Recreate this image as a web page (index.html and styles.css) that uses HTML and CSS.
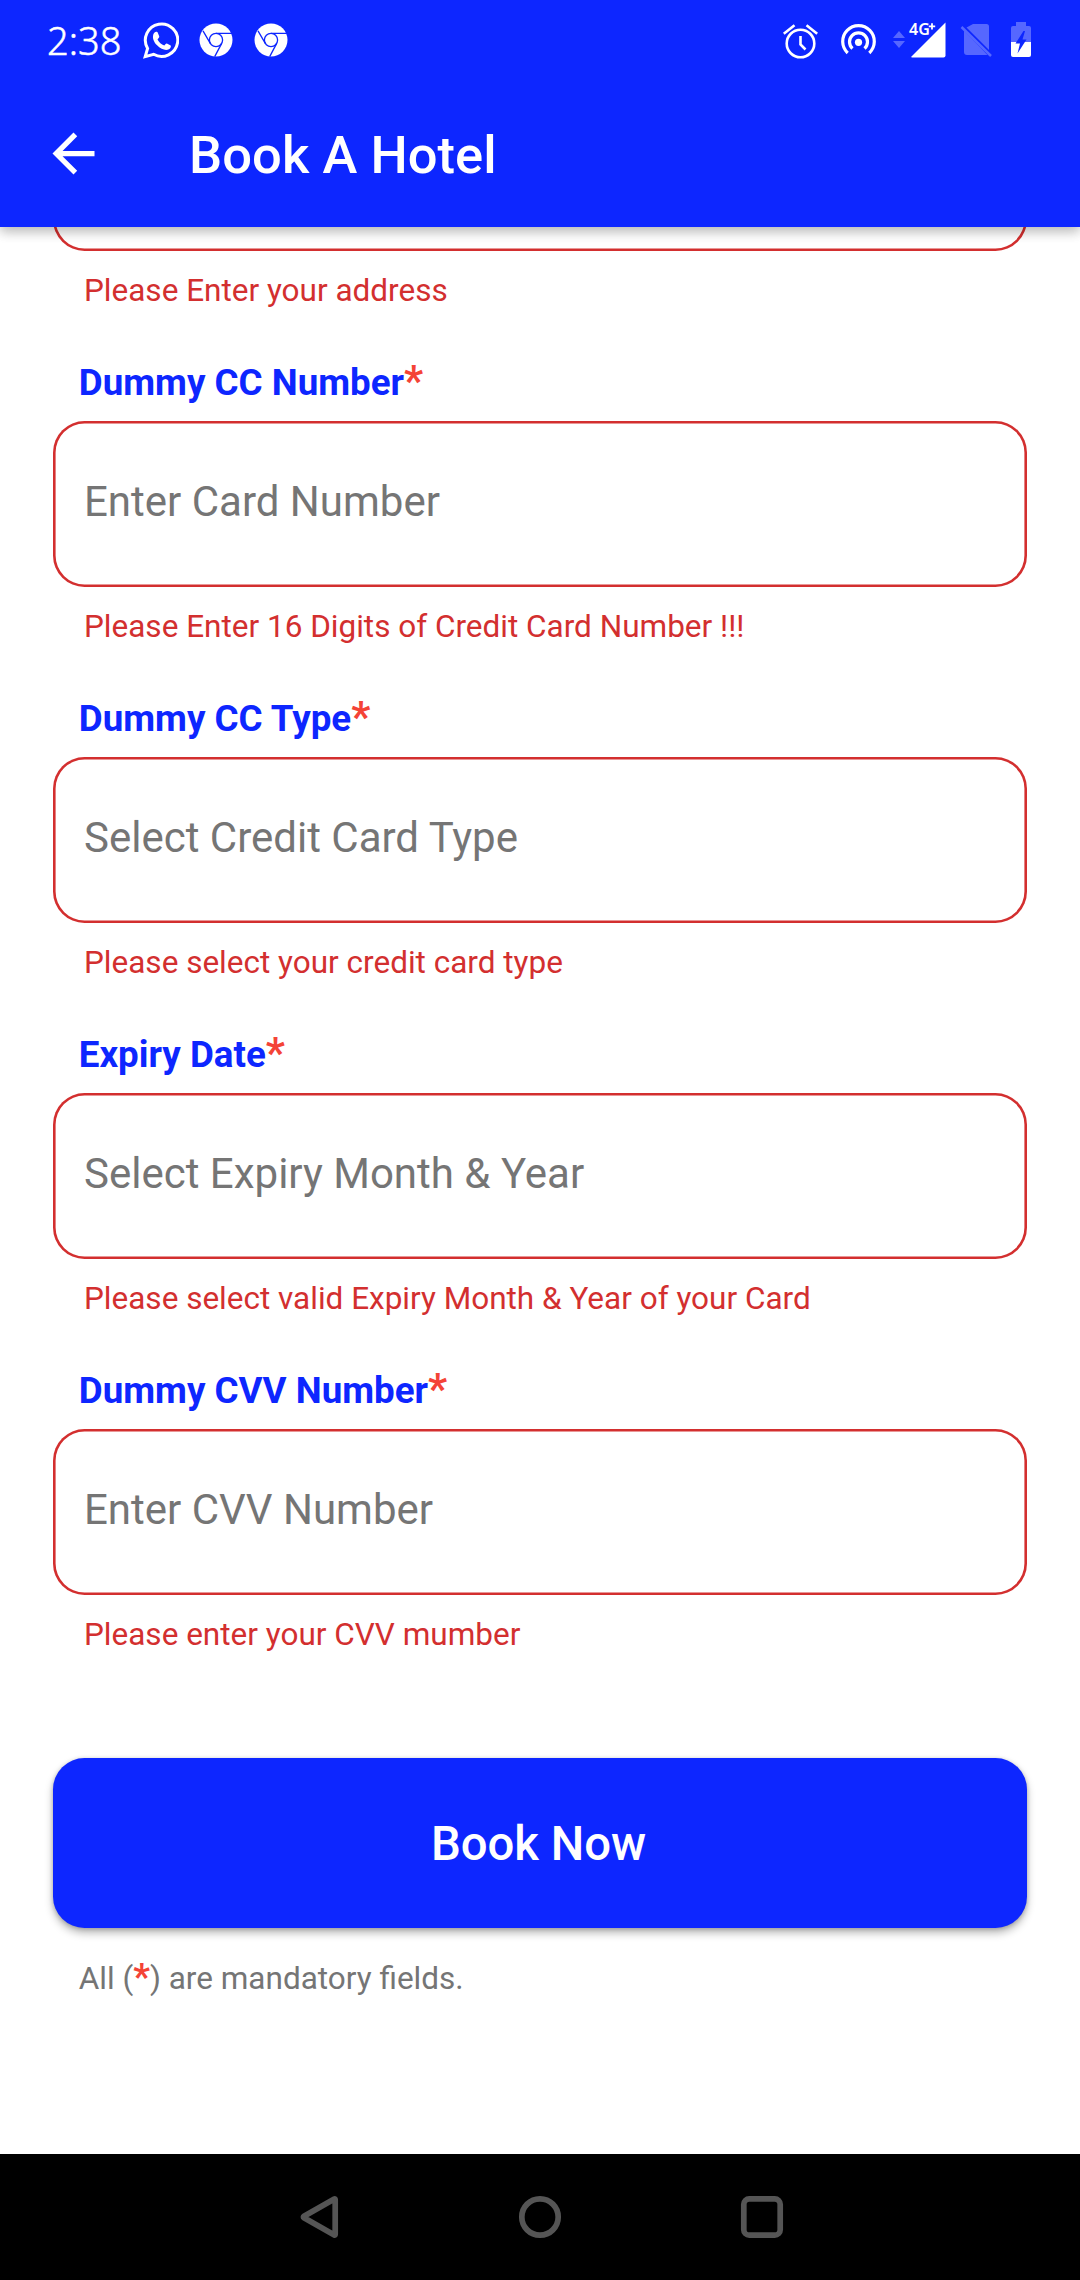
FILE: index.html
```html
<!DOCTYPE html>
<html lang="en">
<head>
<meta charset="utf-8">
<title>Book A Hotel</title>
<link rel="stylesheet" href="styles.css">
</head>
<body>
<div class="screen">
  <header class="top">
    <div class="status">
      <div class="status-left">
        <span class="time">2:38</span>
        <svg class="ic-whatsapp" width="36" height="37" viewBox="0 0 36 37">
          <path d="M2.2 34.6 4.6 26.4A16.2 16.2 0 1 1 10.6 32.300Z" fill="none" stroke="#fff" stroke-width="3" stroke-linejoin="miter"/>
          <path d="M10.300 12.400c.8-1.700 1.700-2.600 2.900-2.600.9 0 1.300.2 1.700 1.200l1.300 3.200c.3.800-.1 1.500-1.700 3.200 1.700 2.900 3.700 4.800 6.800 6.100 1.300-1.400 1.800-2.200 2.600-1.900l3.300 1.700c.8.4.8 1 .5 2-.6 1.900-2.600 2.700-4.600 2.700-2.600-.2-6.100-1.700-9.300-5-2.900-3.200-4.600-6.700-3.500-10.600z" fill="#fff"/>
        </svg>
        <svg class="ic-chrome" width="34" height="34" viewBox="0 0 34 34">
          <circle cx="17" cy="17" r="16.500" fill="#fff"/>
          <g fill="none" stroke="#0d26ff" stroke-width="1.300">
            <circle cx="17" cy="17" r="6.600"/>
            <path d="M17 10.400H33M11.300 20.400 4 7.800M22.700 20.400 15.700 33.600"/>
          </g>
        </svg>
        <svg class="ic-chrome" width="34" height="34" viewBox="0 0 34 34">
          <circle cx="17" cy="17" r="16.500" fill="#fff"/>
          <g fill="none" stroke="#0d26ff" stroke-width="1.300">
            <circle cx="17" cy="17" r="6.600"/>
            <path d="M17 10.400H33M11.300 20.400 4 7.800M22.700 20.400 15.700 33.600"/>
          </g>
        </svg>
      </div>
      <svg class="status-right" width="260" height="60" viewBox="780 10 260 60">
        <g fill="none" stroke="#fff" stroke-width="2.600">
          <circle cx="800.500" cy="43.500" r="13.800"/>
          <path d="M800.500 36V44.500L805.500 49.500M783.800 33.800 794.500 25.300M817.200 33.800 806.500 25.300"/>
        </g>
        <g fill="none" stroke="#fff" stroke-width="3.200">
          <path d="M847.700 53A15.800 15.800 0 1 1 869.300 53"/>
          <path d="M852.500 48.500A9 9 0 1 1 864.500 48.500"/>
        </g>
        <circle cx="858.500" cy="42.300" r="3.600" fill="#fff"/>
        <g fill="#fff" fill-opacity=".3">
          <path d="M893 38 899 31 905 38ZM893 41H905L899 48Z"/>
          <path d="M973 24H986.500Q989 24 989 26.500V50L966.500 27.500ZM964 30.500 987.500 55H967Q964 55 964 52Z"/>
          <path d="M1011 42V28Q1011 26 1013 26H1016V22H1026V26H1029Q1031 26 1031 28V42Z"/>
        </g>
        <path d="M961.500 27 991 56" stroke="#5668ff" stroke-width="2.500"/>
        <path d="M911 57 945.500 22.500V55.500Q945.500 57.500 943.500 57.500H912Z" fill="#fff"/>
        <text class="net" x="909" y="34.900">4G</text>
        <path d="M928.800 26.400H935.200M932 23.200V29.600" stroke="#fff" stroke-width="1.800"/>
        <path d="M1011 42H1031V55Q1031 57 1029 57H1013Q1011 57 1011 55Z" fill="#fff"/>
        <path d="M1023.500 31 1015.500 43.500H1020L1017.500 53.500 1026.500 39.500H1022.500L1025 31Z" fill="#0d26ff"/>
      </svg>
    </div>
    <div class="bar">
      <svg width="63" height="63" viewBox="0 0 24 24"><path fill="#fff" d="M20 11H7.830l5.590-5.590L12 4l-8 8 8 8 1.410-1.410L7.830 13H20v-2z"/></svg>
      <h1 class="title">Book A Hotel</h1>
    </div>
  </header>
  <main class="form">
    <div class="field clipped">
      <div class="box"></div>
      <p class="error">Please Enter your address</p>
    </div>
    <div class="field">
      <div class="label">Dummy CC Number<span class="star">*</span></div>
      <div class="box">Enter Card Number</div>
      <p class="error">Please Enter 16 Digits of Credit Card Number !!!</p>
    </div>
    <div class="field">
      <div class="label">Dummy CC Type<span class="star">*</span></div>
      <div class="box">Select Credit Card Type</div>
      <p class="error">Please select your credit card type</p>
    </div>
    <div class="field">
      <div class="label">Expiry Date<span class="star">*</span></div>
      <div class="box">Select Expiry Month &amp; Year</div>
      <p class="error">Please select valid Expiry Month &amp; Year of your Card</p>
    </div>
    <div class="field">
      <div class="label">Dummy CVV Number<span class="star">*</span></div>
      <div class="box">Enter CVV Number</div>
      <p class="error">Please enter your CVV mumber</p>
    </div>
    <button class="book">Book Now</button>
    <p class="note">All (<span class="star">*</span>) are mandatory fields.</p>
  </main>
  <nav class="nav">
    <svg width="44" height="46" viewBox="0 0 44 46"><path d="M39.200 5.500V40.500Q39.200 41.500 38.300 41L8 23.800Q6.800 23 8 22.200L38.300 5Q39.200 4.500 39.200 5.500Z"/></svg>
    <svg width="44" height="46" viewBox="0 0 44 46"><circle cx="22" cy="23" r="18.200"/></svg>
    <svg width="44" height="46" viewBox="0 0 44 46"><rect x="3.800" y="4.800" width="36.400" height="36.400" rx="5.500"/></svg>
  </nav>
</div>
</body>
</html>
```

FILE: styles.css
```css
* { box-sizing: border-box; }
body { margin: 0; background: #fff; font-family: Roboto, sans-serif; }
h1, p { margin: 0; }
svg { display: block; flex: none; }

.screen { width: 1080px; height: 2280px; display: flex; flex-direction: column; overflow: hidden; }

.top {
  position: relative;
  z-index: 1;
  height: 227px;
  flex: none;
  background: #0d26ff;
  color: #fff;
  box-shadow: 0 5px 11px rgba(0, 0, 0, .2), 0 2px 14px rgba(0, 0, 0, .12);
}
.status { height: 80px; display: flex; justify-content: space-between; align-items: center; padding: 0 40px 0 47px; }
.status-left { display: flex; align-items: center; }
.time { font: 300 38px/40px "Noto Sans", sans-serif; width: 96px; -webkit-text-stroke: .5px #fff; }
.ic-chrome { margin-left: 20px; }
.ic-chrome + .ic-chrome { margin-left: 21px; }
.net { font: 600 16px "Noto Sans", sans-serif; fill: #fff; }
.bar { height: 147px; display: flex; align-items: center; gap: 84px; padding-left: 42px; }
.title { font-size: 52.5px; font-weight: 500; line-height: 62px; padding-top: 3px; letter-spacing: .06px; }

.form { flex: 1; min-height: 0; overflow: hidden; padding: 0 53.5px 0 52.5px; }
.field { padding-top: 50.2px; }
.clipped { padding-top: 0; margin-top: -141.8px; }
.label { padding-left: 26.25px; margin-bottom: 16px; font-size: 36.75px; font-weight: 700; line-height: 44px; height: 44px; color: #0d26ff; }
.star { color: #f44336; font-weight: 700; line-height: 0; }
.label .star { font-size: 42px; }
.box {
  height: 165.6px;
  border-radius: 31.5px;
  box-shadow: inset 0 0 0 2.6px #d32f2f;
  padding: 57px 31.5px 0;
  font-size: 42px;
  line-height: 48px;
  color: #757575;
}
.error { padding: 20.2px 31.5px 0; font-size: 31.5px; line-height: 40px; color: #d32f2f; }
.book {
  display: block;
  width: 100%;
  height: 170.6px;
  margin-top: 102.9px;
  padding: 1px 2px 0 0;
  border: 0;
  border-radius: 31.5px;
  background: #0d26ff;
  color: #fff;
  font: 500 47.25px/56px Roboto, sans-serif;
  box-shadow: 0 5px 8px rgba(0, 0, 0, .28), 0 1px 4px rgba(0, 0, 0, .2);
}
.note { margin-top: 30.6px; padding-left: 26.25px; font-size: 31.5px; line-height: 40px; color: #757575; }
.note .star { font-size: 36.75px; }

.nav { flex: none; height: 126px; background: #000; display: flex; justify-content: center; align-items: center; gap: 178px; }
.nav svg { fill: none; stroke: #555; stroke-width: 5.7px; }
```
